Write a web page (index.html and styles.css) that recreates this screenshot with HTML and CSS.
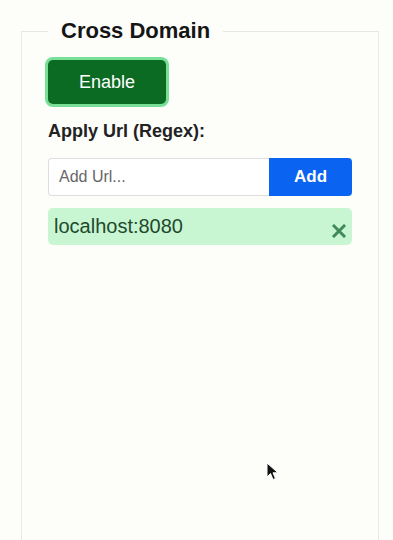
FILE: index.html
```html
<!DOCTYPE html>
<html lang="en">
<head>
  <meta charset="UTF-8" />
  <meta name="viewport" content="width=device-width, initial-scale=1.0" />
  <title>Cross Domain</title>
  <link rel="stylesheet" href="styles.css">
</head>
<body>
  <!-- PANEL -->
  <fieldset class="panel">
    <legend>Cross Domain</legend>

    <button type="button" class="btn-enable">Enable</button>

    <label class="field-label" for="url">Apply Url (Regex):</label>

    <!-- Add url -->
    <div class="url-form">
      <input id="url" type="text" size="10" placeholder="Add Url..." />
      <button type="button" class="btn-add">Add</button>
    </div>

    <!-- Url list -->
    <ul class="url-list">
      <li class="url-item">
        <span>localhost:8080</span>
        <svg class="remove" width="14" height="14" viewBox="0 0 14 14">
          <path d="M2 2 L12 12 M12 2 L2 12" stroke="currentColor" stroke-width="3" stroke-linecap="square" />
        </svg>
      </li>
    </ul>
  </fieldset>

  <!-- mouse pointer -->
  <svg class="cursor" width="14" height="20" viewBox="0 0 14 20">
    <path d="M1 1 L1 15 L4.5 11.5 L7 17.5 L9.5 16.5 L7 10.8 L12 10.8 Z" fill="#111" stroke="#fff" stroke-width="1" />
  </svg>
</body>
</html>
```

FILE: styles.css
```css
/* GLOBAL */
body { margin:0; padding:0; background:#fdfdfa; font-family:'Liberation Sans', Arial, sans-serif; color:#1a1a1a; position:relative; height:540px; overflow:hidden; }

/* PANEL */
.panel { margin:18px 0 0 21px; width:304px; min-width:0; min-height:560px; box-sizing:content-box; border:1px solid #e7e7e3; padding:16px 26px 0; }
.panel legend { padding:0 13px; font-size:22px; font-weight:700; line-height:26px; color:#151515; }

/* ENABLE */
.btn-enable { display:block; width:118px; height:44px; background:#0b6b23; color:#fff; border:none; border-radius:5px;
  box-shadow:0 0 0 3px #78e096; font-family:inherit; font-size:18px; cursor:pointer; }

.field-label { display:block; margin-top:16px; font-size:18px; font-weight:700; line-height:22px; color:#222; }

/* ADD URL */
.url-form { display:flex; margin-top:16px; height:38px; }
.url-form input { flex:1; min-width:0; box-sizing:border-box; border:1px solid #dedede; border-right:none; border-radius:4px 0 0 4px;
  padding:0 10px; font-family:inherit; font-size:16px; color:#333; background:#fff; outline:none; }
.url-form input::placeholder { color:#666; }
.btn-add { flex:0 0 83px; border:none; border-radius:0 4px 4px 0; background:#0b63f2; color:#fff; font-family:inherit; font-size:17px; font-weight:700; cursor:pointer; }

/* URL LIST */
.url-list { list-style:none; margin:12px 0 0; padding:0; }
.url-item { display:flex; justify-content:space-between; align-items:center; height:37px; box-sizing:border-box; padding:0 6px;
  background:#c8f6d3; border-radius:5px; font-size:20px; color:#1f4a2c; }
.url-item .remove { color:#3f8a58; margin-top:8px; }

/* POINTER */
.cursor { position:absolute; left:266px; top:462px; }
```
